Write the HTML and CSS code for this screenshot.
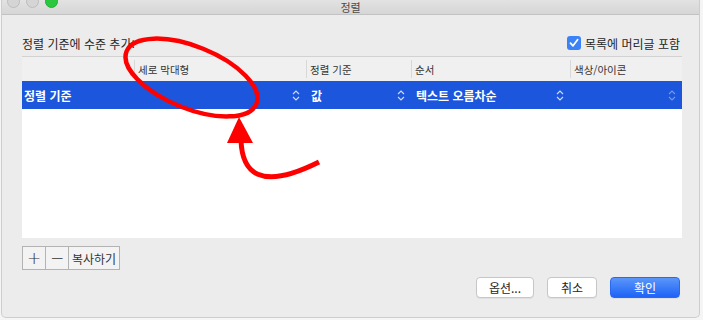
FILE: index.html
```html
<!DOCTYPE html>
<html lang="ko">
<head>
    <meta charset="UTF-8">
    <title>정렬</title>
    <link rel="stylesheet" href="styles.css">
</head>
<body>

    <div class="window">
        <!-- title bar -->
        <div class="titlebar">
            <div class="lights">
                <span class="light"></span>
                <span class="light"></span>
                <span class="light green"></span>
            </div>
            <div class="title">정렬</div>
        </div>

        <div class="content">
            <div class="top-row">
                <span>정렬 기준에 수준 추가:</span>
                <label class="check">
                    <span class="box">
                        <svg width="10" height="10" viewBox="0 0 10 10"><path d="M1.5 5.2 L4 7.8 L8.6 1.8" fill="none" stroke="#fff" stroke-width="1.8" stroke-linecap="round" stroke-linejoin="round"/></svg>
                    </span>
                    목록에 머리글 포함
                </label>
            </div>

            <div class="table">
                <div class="thead">
                    <div class="th c1"></div>
                    <div class="th c2">세로 막대형</div>
                    <div class="th c3">정렬 기준</div>
                    <div class="th c4">순서</div>
                    <div class="th c5">색상/아이콘</div>
                </div>
                <div class="row selected">
                    <div class="cell w12">정렬 기준 <span class="spin"></span></div>
                    <div class="cell c3">값 <span class="spin"></span></div>
                    <div class="cell c4">텍스트 오름차순 <span class="spin"></span></div>
                    <div class="cell c5"><span class="spin faded"></span></div>
                </div>
                <div class="tbody"></div>
            </div>

            <div class="seg">
                <button class="seg-btn sq">+</button>
                <button class="seg-btn sq">−</button>
                <button class="seg-btn">복사하기</button>
            </div>

            <div class="actions">
                <button class="btn">옵션...</button>
                <button class="btn">취소</button>
                <button class="btn primary">확인</button>
            </div>
        </div>

        <!-- red markup drawn over the dialog -->
        <svg class="markup" width="703" height="320" viewBox="0 0 703 320">
            <ellipse cx="190.5" cy="77.5" rx="70" ry="31" transform="rotate(22 190.5 77.5)" fill="none" stroke="#ff0000" stroke-width="4.5"/>
            <path d="M240 140 C 241 172, 258 192, 318 162" fill="none" stroke="#ff0000" stroke-width="5"/>
            <polygon points="238,117 226,143 252,143" fill="#ff0000"/>
        </svg>
    </div>

</body>
</html>
```

FILE: styles.css
```css
body {
    margin: 0;
    background: #f5f5f5;
    font-family: "Noto Sans CJK KR", "Noto Sans", sans-serif;
    color: #262626;
}

.window {
    position: relative;
    width: 699px;
    height: 318px;
    margin-left: 1px;
    background: #ececec;
    border: 1px solid #cdcdcd;
    border-top: none;
    border-radius: 0 0 5px 5px;
    box-sizing: border-box;
    display: flex;
    flex-direction: column;
    overflow: hidden;
}

.titlebar {
    height: 14px;
    background: linear-gradient(#e2e2e2, #d6d6d6);
    border-bottom: 1px solid #c2c2c2;
    display: flex;
    align-items: flex-start;
    overflow: hidden;
}

.lights {
    display: flex;
    gap: 6px;
    margin-left: 5px;
    margin-top: -5px;
    width: 70px;
}

.light {
    width: 11px;
    height: 11px;
    border-radius: 50%;
    background: #d5d5d5;
    border: 1px solid #bdbdbd;
}

.light.green {
    background: #2bc83f;
    border-color: #22ae35;
}

.title {
    flex: 1;
    text-align: center;
    margin-right: 75px;
    font-size: 11px;
    line-height: 14px;
    color: #4b4b4b;
}

.content {
    flex: 1;
    padding: 0 19px 0 20px;
    display: flex;
    flex-direction: column;
}

.top-row {
    display: flex;
    justify-content: space-between;
    align-items: center;
    height: 22px;
    margin-top: 17px;
    font-size: 12px;
}

.check {
    display: flex;
    align-items: center;
    gap: 4px;
}

.box {
    width: 14px;
    height: 14px;
    border-radius: 3px;
    background: #3b82f7;
    display: flex;
    align-items: center;
    justify-content: center;
}

.table {
    margin-top: 2px;
    width: 660px;
    border-top: 1px solid #d2d2d2;
}

.thead {
    display: flex;
    height: 24px;
    background: #f0f0f0;
}

.th {
    font-size: 10.5px;
    color: #333;
    display: flex;
    align-items: center;
    padding-left: 3px;
    margin: 3px 0;
    border-left: 1px solid #d8d8d8;
    box-sizing: border-box;
}

.th.c1 {
    border-left: none;
}

.c1 { width: 112px; }
.c2 { width: 172px; }
.c3 { width: 105px; }
.c4 { width: 159px; }
.c5 { width: 112px; }
.w12 { width: 284px; }

.row {
    display: flex;
    height: 28px;
}

.selected {
    background: #1b56dc;
    color: #fff;
}

.cell {
    display: flex;
    align-items: center;
    justify-content: space-between;
    font-size: 12px;
    font-weight: bold;
    padding: 0 6px 0 5px;
    box-sizing: border-box;
}

.cell.w12 {
    padding-left: 2px;
}

.cell.c5 {
    justify-content: flex-end;
}

.spin {
    width: 8px;
    height: 13px;
    background:
        url("data:image/svg+xml;utf8,<svg xmlns='http://www.w3.org/2000/svg' width='8' height='13'><path d='M1 5 L4 2 L7 5 M1 8 L4 11 L7 8' fill='none' stroke='white' stroke-width='1.1'/></svg>") no-repeat;
    opacity: 0.8;
}

.spin.faded {
    opacity: 0.4;
}

.tbody {
    height: 129px;
    background: #fff;
}

.seg {
    display: flex;
    margin-top: 8px;
}

.seg-btn {
    height: 24px;
    padding: 0 3px;
    background: #f3f3f3;
    border: 1px solid #b3b3b3;
    margin-left: -1px;
    font-family: inherit;
    font-size: 12px;
    color: #333;
}

.seg-btn:first-child {
    margin-left: 0;
}

.seg-btn.sq {
    width: 24px;
    font-family: "DejaVu Sans", sans-serif;
    font-size: 17px;
    font-weight: 200;
    line-height: 1;
}

.actions {
    display: flex;
    justify-content: flex-end;
    gap: 13px;
    margin-top: 7px;
}

.btn {
    height: 21px;
    min-width: 50px;
    padding: 0 12px;
    background: #fff;
    border: 1px solid #c6c6c6;
    border-radius: 4px;
    font-family: inherit;
    font-size: 12px;
    color: #262626;
    box-shadow: 0 1px 0 rgba(0, 0, 0, 0.05);
}

.btn.primary {
    width: 70px;
    color: #fff;
    border-color: #2a68f0;
    background: linear-gradient(#5a96fa, #1e63f6);
}

.markup {
    position: absolute;
    left: -1px;
    top: 0;
    pointer-events: none;
}
```
